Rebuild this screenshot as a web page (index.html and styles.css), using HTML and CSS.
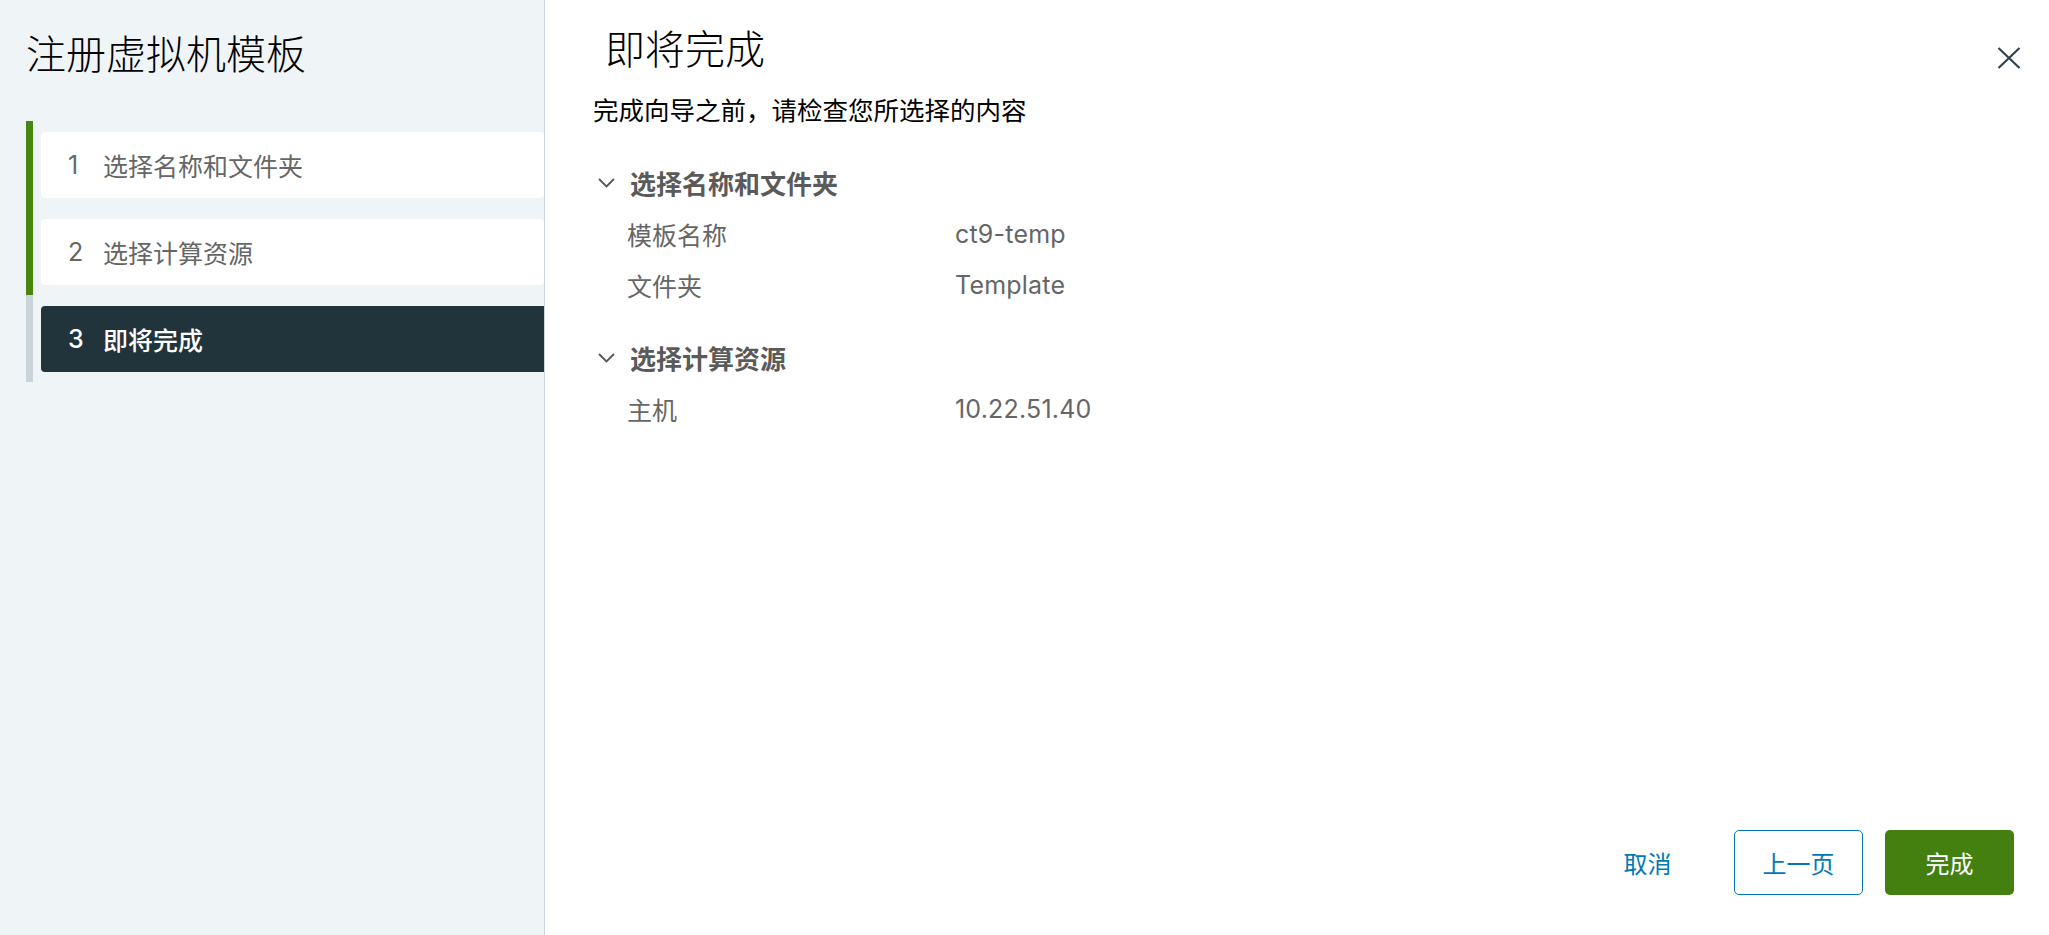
FILE: index.html
```html
<!DOCTYPE html>
<html lang="zh-CN">
<head>
<meta charset="utf-8">
<title>注册虚拟机模板</title>
<link rel="stylesheet" href="styles.css">
</head>
<body>
<div class="wizard">
  <aside class="nav">
    <h1 class="nav-title">注册虚拟机模板</h1>
    <ol class="steps">
      <li class="step done"><div class="step-box"><span class="num">1</span><span class="label">选择名称和文件夹</span></div></li>
      <li class="step done"><div class="step-box"><span class="num">2</span><span class="label">选择计算资源</span></div></li>
      <li class="step current"><div class="step-box"><span class="num">3</span><span class="label">即将完成</span></div></li>
    </ol>
  </aside>
  <main class="content">
    <header class="content-head">
      <h2 class="page-title">即将完成</h2>
      <button class="close" aria-label="关闭">
        <svg width="24" height="22" viewBox="0 0 24 22"><path d="M1.5 1 L22.5 21 M22.5 1 L1.5 21" stroke="#314351" stroke-width="2.2" fill="none"/></svg>
      </button>
    </header>
    <p class="intro">完成向导之前，请检查您所选择的内容</p>
    <section class="review first">
      <div class="review-head">
        <svg class="chev" width="17" height="10" viewBox="0 0 17 10"><path d="M1 1 L8.5 8.5 L16 1" stroke="#565656" stroke-width="1.8" fill="none"/></svg>
        <span>选择名称和文件夹</span>
      </div>
      <div class="row"><span class="k">模板名称</span><span class="v">ct9-temp</span></div>
      <div class="row"><span class="k">文件夹</span><span class="v">Template</span></div>
    </section>
    <section class="review">
      <div class="review-head">
        <svg class="chev" width="17" height="10" viewBox="0 0 17 10"><path d="M1 1 L8.5 8.5 L16 1" stroke="#565656" stroke-width="1.8" fill="none"/></svg>
        <span>选择计算资源</span>
      </div>
      <div class="row"><span class="k">主机</span><span class="v">10.22.51.40</span></div>
    </section>
    <footer class="actions">
      <button class="btn btn-link">取消</button>
      <button class="btn btn-outline">上一页</button>
      <button class="btn btn-success">完成</button>
    </footer>
  </main>
</div>
</body>
</html>
```

FILE: styles.css
```css
html, body {
  margin: 0;
  padding: 0;
  height: 100%;
}
body {
  font-family: Inter, "Noto Sans CJK SC", sans-serif;
  background: #fff;
}
.wizard {
  display: flex;
  height: 935px;
}
.nav {
  box-sizing: border-box;
  width: 545px;
  flex: 0 0 545px;
  background: #eff4f7;
  border-right: 1px solid #cdd6dd;
  padding-left: 26px;
}
.nav-title {
  margin: 0;
  padding-top: 31px;
  font-size: 40px;
  line-height: 48px;
  font-weight: 300;
  color: #000;
}
.steps {
  list-style: none;
  margin: 42px 0 0;
  padding: 0;
}
.step {
  border-left: 7px solid #cbd4db;
  padding: 11px 0 10px 8px;
}
.step.done {
  border-left-color: #48860f;
}
.step-box {
  display: flex;
  align-items: center;
  height: 66px;
  background: #fff;
  border-radius: 4px;
  padding-left: 27px;
  font-size: 25px;
  color: #666;
}
.step.current .step-box {
  background: #21333b;
  color: #fff;
  border-radius: 4px 0 0 4px;
  font-weight: 500;
}
.num {
  width: 35px;
}
.content {
  flex: 1;
  display: flex;
  flex-direction: column;
  padding: 0 35px 40px 48px;
}
.content-head {
  display: flex;
  justify-content: space-between;
  align-items: flex-start;
}
.page-title {
  margin: 26px 0 0 12px;
  font-size: 40px;
  line-height: 48px;
  font-weight: 300;
  color: #000;
}
.close {
  margin: 47px -7px 0 0;
  padding: 0;
  border: none;
  background: none;
  line-height: 0;
}
.intro {
  margin: 19px 0 0;
  font-size: 25.5px;
  line-height: 36px;
  color: #000;
}
.review.first {
  margin-top: 28px;
}
.review {
  margin-top: 22px;
}
.review-head {
  display: flex;
  align-items: center;
  height: 51px;
  font-size: 26px;
  font-weight: 700;
  color: #5a5a5a;
}
.chev {
  margin: 0 15px 0 5px;
}
.row {
  display: flex;
  height: 51px;
  align-items: center;
  padding-left: 34px;
  font-size: 25px;
  color: #666;
}
.k {
  width: 328px;
}
.v {
  color: #666;
  letter-spacing: 0.2px;
}
.actions {
  margin-top: auto;
  display: flex;
  justify-content: flex-end;
  gap: 22px;
}
.btn {
  box-sizing: border-box;
  width: 129px;
  height: 65px;
  border-radius: 5px;
  font-family: Inter, "Noto Sans CJK SC", sans-serif;
  font-size: 24px;
  cursor: pointer;
}
.btn-link {
  background: transparent;
  border: none;
  color: #0079b8;
}
.btn-outline {
  background: #fff;
  border: 1px solid #0079b8;
  color: #0079b8;
}
.btn-success {
  background: #43800f;
  border: none;
  color: #fff;
}
```
